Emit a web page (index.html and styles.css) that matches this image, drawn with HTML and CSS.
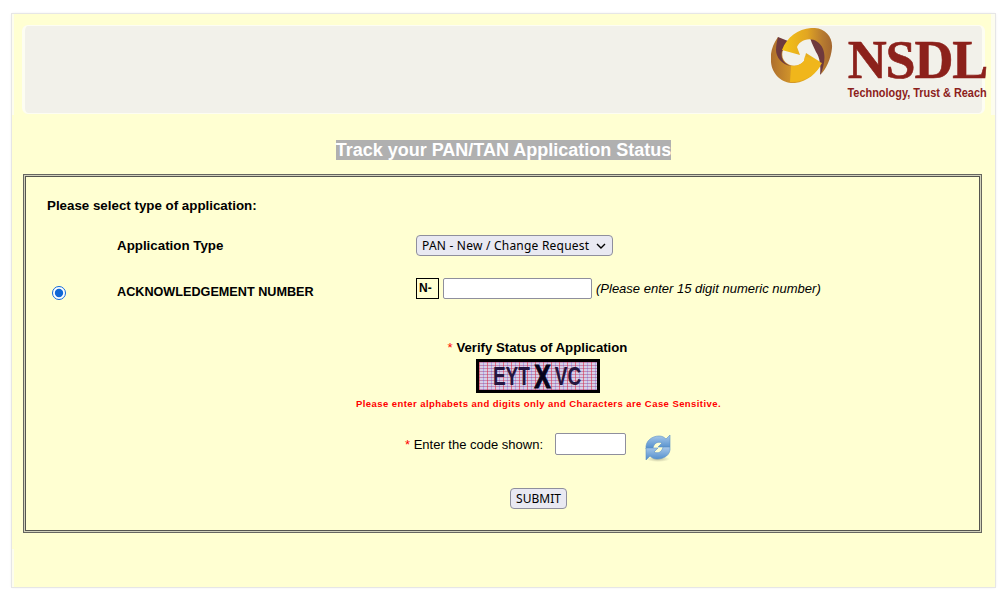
FILE: index.html
```html
<!DOCTYPE html>
<html lang="en">
<head>
<meta charset="utf-8">
<title>Track your PAN/TAN Application Status</title>
<link rel="stylesheet" href="styles.css">
</head>
<body>
<main class="panel">
  <header class="header">
    <div class="logo">
      <svg class="logo-mark" viewBox="0 0 62 56" width="62" height="56" aria-hidden="true">
        <defs>
          <linearGradient id="ringA" x1="0" y1="0" x2="1" y2="0">
            <stop offset="0" stop-color="#f6c414"/>
            <stop offset="0.5" stop-color="#e2a622"/>
            <stop offset="0.8" stop-color="#b87c30"/>
            <stop offset="1" stop-color="#a4672f"/>
          </linearGradient>
          <linearGradient id="ringB" x1="0" y1="0" x2="1" y2="0">
            <stop offset="0" stop-color="#ad6e2e"/>
            <stop offset="0.4" stop-color="#d2952a"/>
            <stop offset="1" stop-color="#f6c414"/>
          </linearGradient>
        </defs>
        <path d="M7 9 C1 17 -1 26 0 34 C1 47 12 56 24 55 C36 54 46 45 51 35 L35 25 L33 33 C29 38 22 39 17 36 C12 33 10 28 12 22 Z" fill="url(#ringB)"/>
        <path d="M7 9 L22 15 L11 23 C9 30 13 36 20 38 C11 37 5 29 5 22 C5 17 6 13 7 9 Z" fill="#6f3a3d"/>
        <path d="M38 6 C49 5 59 13 58 25 C57 33 54 41 49 47 C50 38 49 30 45 24 C42 18 39 11 38 6 Z" fill="#6f3a3d"/>
        <path d="M11 22 C16 9 27 1 40 0 C53 -1 62 8 61 20 C60 31 55 41 50 46 C53 37 55 29 52 21 C48 11 37 9 30 14 C28 15 27 17 26 19 L29 27 Z" fill="url(#ringA)"/>
        <path d="M51 35 L34 28 L33 33 C30 37 25 38 20 38 L19 54 C33 55 45 46 51 35 Z" fill="#f0b61b"/>
      </svg>
      <div class="logo-words">
        <span class="logo-name">NSDL</span>
        <span class="logo-tag">Technology, Trust &amp; Reach</span>
      </div>
    </div>
  </header>

  <h1 class="title"><span class="title-text">Track your PAN/TAN Application Status</span></h1>

  <section class="box">
    <p class="lead">Please select type of application:</p>

    <div class="row row-type">
      <span class="row-mark"></span>
      <label class="row-label" for="apptype">Application Type</label>
      <div class="row-field">
        <select id="apptype" class="select">
          <option>PAN - New / Change Request</option>
        </select>
      </div>
    </div>

    <div class="row row-ack">
      <span class="row-mark"><input class="radio" type="radio" name="mode" checked></span>
      <label class="row-label row-label-ack" for="ack">ACKNOWLEDGEMENT NUMBER</label>
      <div class="row-field row-field-ack">
        <span class="prefix">N-</span>
        <input id="ack" class="text ack-input" type="text">
        <em class="hint">(Please enter 15 digit numeric number)</em>
      </div>
    </div>

    <div class="verify">
      <p class="verify-title"><span class="star">*</span> Verify Status of Application</p>
      <div class="captcha"><span class="captcha-text">EYT<b class="captcha-x">X</b>VC</span></div>
      <p class="warning">Please enter alphabets and digits only and Characters are Case Sensitive.</p>
      <div class="code-row">
        <label class="code-label" for="code"><span class="star">*</span> Enter the code shown:</label>
        <input id="code" class="text code-input" type="text">
        <svg class="refresh" viewBox="0 0 26 28" width="26" height="28" aria-hidden="true">
          <defs>
            <linearGradient id="arrowBlue" x1="0" y1="0" x2="0" y2="1">
              <stop offset="0" stop-color="#a9c9ea"/>
              <stop offset="1" stop-color="#4f8ccb"/>
            </linearGradient>
            <radialGradient id="shade">
              <stop offset="0" stop-color="#8a8a70" stop-opacity="0.55"/>
              <stop offset="1" stop-color="#8a8a70" stop-opacity="0"/>
            </radialGradient>
          </defs>
          <ellipse cx="13" cy="25" rx="12" ry="3" fill="url(#shade)"/>
          <path d="M1 15 C0 7 7 2 14 2 C17 2 19 3 21 5 L25 1 L25 13 L13 13 L17 9 C13 7 9 9 8 14 Z" fill="url(#arrowBlue)" stroke="#5b90c8" stroke-width="0.6"/>
          <path d="M25 13 C26 21 19 25 12 25 C9 25 7 24 5 22 L1 26 L1 14 L13 14 L9 18 C13 20 17 18 18 13 Z" fill="url(#arrowBlue)" stroke="#5b90c8" stroke-width="0.6"/>
        </svg>
      </div>
      <button class="submit" type="button">SUBMIT</button>
    </div>
  </section>
</main>
</body>
</html>
```
FILE: styles.css
```css
* { box-sizing: border-box; }

html, body {
  margin: 0;
  height: 100%;
  background: #ffffff;
}

body {
  padding: 14px 13px 0 12px;
  font-family: "Liberation Sans", Arial, sans-serif;
  color: #000000;
  overflow: hidden;
}

.panel {
  height: 573px;
  background:
    linear-gradient(90deg, #fdfdee 0 2px, transparent 2px) 0 0 / 100% 101px no-repeat,
    linear-gradient(270deg, #fdfdee 0 4px, transparent 4px) 0 0 / 100% 101px no-repeat,
    linear-gradient(90deg, #fdfdee 0 2px, transparent 2px) 0 100% / 100% 38px no-repeat,
    #ffffd2;
  box-shadow: 0 0 0 1px #e6e6e6, 0 0 3px #e2e2e2;
  padding: 11px 10px 0;
}

.header {
  height: 89px;
  background: #f2f1ea;
  border-style: solid;
  border-color: #fdfdf2;
  border-width: 1px 3px 1px 3px;
  border-radius: 6px;
  display: flex;
  justify-content: flex-end;
}

.logo {
  display: flex;
  align-items: flex-start;
  gap: 16px;
  margin-right: -5px;
}

.logo-mark {
  margin-top: 2px;
  flex: none;
}

.logo-words {
  display: flex;
  flex-direction: column;
  align-items: flex-end;
  width: 138px;
}

.logo-name {
  font-family: "Liberation Serif", "Times New Roman", serif;
  font-weight: 700;
  font-size: 54px;
  line-height: 38px;
  margin-top: 15px;
  color: #8c211b;
  letter-spacing: -1.2px;
  -webkit-text-stroke: 0.6px #8c211b;
}

.logo-tag {
  font-weight: 700;
  font-size: 13px;
  line-height: 14px;
  margin-top: 7px;
  color: #8c211b;
  white-space: nowrap;
  transform: scaleX(0.84);
  transform-origin: right center;
}

.title {
  margin: 26px 0 13px;
  text-align: center;
  font-size: 18px;
  line-height: 21px;
  font-weight: 700;
  color: #ffffff;
}

.title-text {
  background: #b0b0b0;
}

.box {
  margin: 0 3px 0 1px;
  height: 359px;
  border: 1px solid #666660;
  box-shadow: inset 0 0 0 1px #d2d2bc, inset 0 0 0 2px #55554f;
  padding: 22px 0 0 23px;
}

.lead {
  margin: 0;
  font-size: 13.33px;
  line-height: 18px;
  font-weight: 700;
}

.row {
  display: grid;
  grid-template-columns: 70px 299px 1fr;
  align-items: center;
}

.row-type { margin-top: 20px; }
.row-ack { margin-top: 21px; }

.row-label {
  font-size: 13.33px;
  font-weight: 700;
}

.row-label-ack {
  font-size: 12.65px;
  padding-top: 7px;
}

.row-mark { display: flex; padding-top: 9px; }

.radio {
  margin: 0 0 0 5px;
  width: 14px;
  height: 14px;
  accent-color: #0f67d6;
}

.row-field-ack {
  display: flex;
  align-items: center;
  gap: 4px;
}

.select {
  width: 197px;
  height: 21px;
  padding-left: 5px;
  appearance: none;
  font-family: "Noto Sans", "Liberation Sans", sans-serif;
  font-size: 12px;
  letter-spacing: 0.22px;
  color: #000000;
  background-color: #e9e9f2;
  background-image: url("data:image/svg+xml,%3Csvg xmlns='http://www.w3.org/2000/svg' width='10' height='6'%3E%3Cpath d='M1 1l4 4 4-4' fill='none' stroke='%23000' stroke-width='1.4'/%3E%3C/svg%3E");
  background-repeat: no-repeat;
  background-position: right 6px center;
  border: 1px solid #8f8f9d;
  border-radius: 4px;
}

.prefix {
  width: 23px;
  height: 21px;
  border: 1px solid #000000;
  font-size: 12px;
  font-weight: 700;
  line-height: 19px;
  padding-left: 2px;
}

.text {
  height: 21px;
  background: #ffffff;
  border: 1px solid #8f8f9d;
  border-radius: 2px;
  padding: 0 2px;
}

.ack-input { width: 149px; }

.hint {
  font-size: 13px;
}

.verify {
  margin: 39px 0 0 47px;
  display: flex;
  flex-direction: column;
  align-items: center;
}

.verify-title {
  margin: 0;
  font-size: 13.2px;
  line-height: 18px;
  font-weight: 700;
}

.star {
  color: #ff0000;
  font-weight: 400;
}

.captcha {
  width: 124px;
  height: 34px;
  margin-top: 2px;
  border: 3px solid #000000;
  background-color: #c0b8dc;
  background-image:
    repeating-linear-gradient(90deg, rgba(225, 40, 60, 0.55) 0 1px, transparent 1px 4px, rgba(60, 60, 220, 0.25) 4px 5px, transparent 5px 8px),
    repeating-linear-gradient(0deg, rgba(200, 40, 90, 0.3) 0 1px, rgba(255, 255, 255, 0.35) 1px 3px);
  display: flex;
  align-items: center;
  justify-content: center;
}

.captcha-text {
  font-size: 25px;
  line-height: 28px;
  font-weight: 700;
  color: #241540;
  transform: scaleX(0.76);
  white-space: nowrap;
}

.captcha-x {
  display: inline-block;
  margin: 0 8px;
  color: #06041a;
  -webkit-text-stroke: 0.8px #06041a;
  transform: scale(1.3, 1.3);
}

.warning {
  margin: 5px 0 0 2px;
  font-size: 9.5px;
  line-height: 12px;
  font-weight: 700;
  color: #ff0000;
  letter-spacing: 0.43px;
}

.code-row {
  display: flex;
  align-items: flex-start;
  margin-top: 23px;
  padding-left: 1px;
}

.code-label {
  font-size: 13px;
  line-height: 22px;
  padding-top: 1px;
}

.code-input {
  width: 71px;
  height: 22px;
  margin-left: 12px;
}

.refresh {
  margin: 1px 0 0 19px;
  flex: none;
}

.submit {
  margin: 26px 0 0 2px;
  width: 57px;
  height: 21px;
  padding: 0;
  font-family: "Noto Sans", "Liberation Sans", sans-serif;
  font-size: 12px;
  color: #000000;
  background: #e9e9f2;
  border: 1px solid #8f8f9d;
  border-radius: 4px;
}
```
